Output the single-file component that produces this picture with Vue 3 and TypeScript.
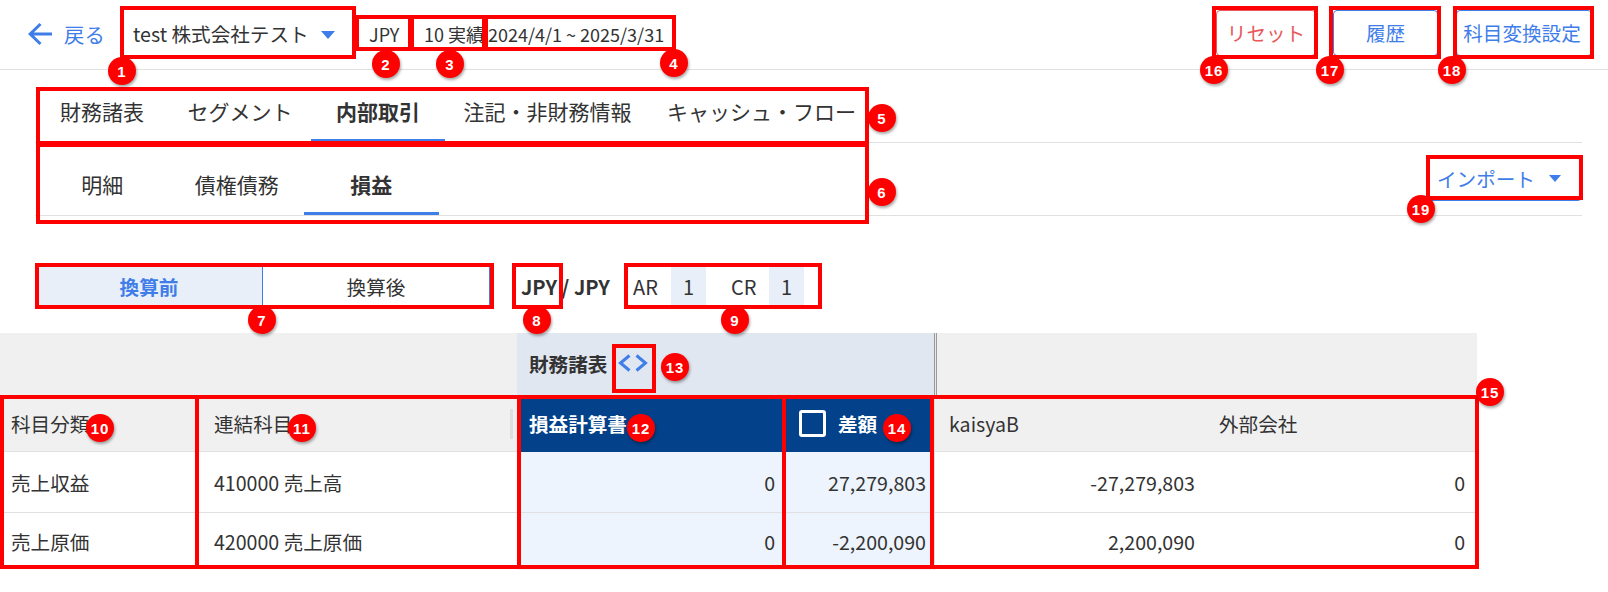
<script setup lang="ts">
interface Box { x: number; y: number; w: number; h: number }
interface Pin { n: number; x: number; y: number }

const mainTabs = ['財務諸表', 'セグメント', '内部取引', '注記・非財務情報', 'キャッシュ・フロー']
const subTabs = ['明細', '債権債務', '損益']

const rows = [
  { cat: '売上収益', acct: '410000 売上高', pl: '0', diff: '27,279,803', a: '-27,279,803', b: '0' },
  { cat: '売上原価', acct: '420000 売上原価', pl: '0', diff: '-2,200,090', a: '2,200,090', b: '0' },
]

const boxes: Box[] = [
  { x: 120, y: 6, w: 236, h: 53 },
  { x: 355, y: 15, w: 57, h: 36 },
  { x: 410, y: 15, w: 76, h: 36 },
  { x: 484, y: 15, w: 192, h: 36 },
  { x: 36, y: 87, w: 833, h: 58 },
  { x: 36, y: 143, w: 833, h: 81 },
  { x: 35, y: 263, w: 459, h: 46 },
  { x: 512, y: 263, w: 51, h: 46 },
  { x: 624, y: 263, w: 198, h: 46 },
  { x: 0, y: 395, w: 199, h: 174 },
  { x: 195, y: 395, w: 326, h: 174 },
  { x: 517, y: 395, w: 269, h: 174 },
  { x: 612, y: 344, w: 44, h: 49 },
  { x: 782, y: 395, w: 152, h: 174 },
  { x: 930, y: 395, w: 549, h: 174 },
  { x: 1212, y: 6, w: 106, h: 53 },
  { x: 1329, y: 6, w: 112, h: 53 },
  { x: 1453, y: 6, w: 141, h: 53 },
  { x: 1426, y: 155, w: 157, h: 45 },
]

const pins: Pin[] = [
  { n: 1, x: 122, y: 71 }, { n: 2, x: 386, y: 64 }, { n: 3, x: 450, y: 64 }, { n: 4, x: 674, y: 63 },
  { n: 5, x: 882, y: 118 }, { n: 6, x: 882, y: 192 }, { n: 7, x: 262, y: 320 }, { n: 8, x: 537, y: 320 },
  { n: 9, x: 735, y: 320 }, { n: 10, x: 100, y: 428 }, { n: 11, x: 302, y: 428 }, { n: 12, x: 641, y: 428 },
  { n: 13, x: 675, y: 367 }, { n: 14, x: 897, y: 428 }, { n: 15, x: 1490, y: 392 }, { n: 16, x: 1214, y: 70 },
  { n: 17, x: 1330, y: 70 }, { n: 18, x: 1452, y: 70 }, { n: 19, x: 1421, y: 209 },
]

const boxStyle = (b: Box) => ({ left: `${b.x}px`, top: `${b.y}px`, width: `${b.w}px`, height: `${b.h}px` })
const pinStyle = (p: Pin) => ({ left: `${p.x - 14}px`, top: `${p.y - 14}px` })
</script>

<template>
  <div class="page">
    <header class="topbar">
      <div class="back">
        <svg class="arrow" width="24" height="24" viewBox="0 0 24 24" fill="none" stroke="#3f7de8" stroke-width="3">
          <path d="M24 12H2M12.5 2 2.2 12l10.3 10" />
        </svg>
        <span>戻る</span>
      </div>
      <div class="company">
        <span>test 株式会社テスト</span>
        <i class="tri"></i>
      </div>
      <span class="meta jpy">JPY</span>
      <span class="meta actual">10 実績</span>
      <span class="meta date">2024/4/1 ~ 2025/3/31</span>
      <div class="spacer"></div>
      <button class="btn reset">リセット</button>
      <button class="btn hist">履歴</button>
      <button class="btn conv">科目変換設定</button>
    </header>

    <nav class="tabs main">
      <span v-for="t in mainTabs" :key="t" class="tab" :class="{ on: t === '内部取引' }">{{ t }}</span>
    </nav>

    <nav class="tabs sub">
      <span v-for="t in subTabs" :key="t" class="tab" :class="{ on: t === '損益' }">{{ t }}</span>
      <div class="spacer"></div>
      <button class="import"><span>インポート</span><i class="tri"></i></button>
    </nav>

    <section class="controls">
      <div class="toggle">
        <span class="seg active">換算前</span>
        <span class="seg">換算後</span>
      </div>
      <strong class="pair">JPY / JPY</strong>
      <div class="rates">
        <span class="rl">AR</span><span class="rv">1</span>
        <span class="rl cr">CR</span><span class="rv">1</span>
      </div>
    </section>

    <section class="table">
      <div class="cell top span2"></div>
      <div class="cell top group span2b">
        <strong>財務諸表</strong>
        <svg class="chev" width="32" height="18" viewBox="0 0 32 18" fill="none" stroke="#3f7de8" stroke-width="3">
          <path d="M12.5 1.5 3.5 9l9 7.5M19.5 1.5l9 7.5-9 7.5" />
        </svg>
      </div>
      <div class="cell top rule"></div>
      <div class="cell top span2c"></div>

      <div class="cell head pad">科目分類</div>
      <div class="cell head pad grip">連結科目</div>
      <div class="cell head dark pad"><strong>損益計算書</strong></div>
      <div class="cell head dark diffhead"><i class="check"></i><strong>差額</strong></div>
      <div class="cell head line"></div>
      <div class="cell head kaisya">kaisyaB</div>
      <div class="cell head gaibu">外部会社</div>

      <template v-for="(r, i) in rows" :key="r.cat">
        <div class="cell body pad" :class="{ last: i === 1 }">{{ r.cat }}</div>
        <div class="cell body pad" :class="{ last: i === 1 }">{{ r.acct }}</div>
        <div class="cell body num tint pl" :class="{ last: i === 1 }">{{ r.pl }}</div>
        <div class="cell body num tint df" :class="{ last: i === 1 }">{{ r.diff }}</div>
        <div class="cell body line" :class="{ last: i === 1 }"></div>
        <div class="cell body num ka" :class="{ last: i === 1 }">{{ r.a }}</div>
        <div class="cell body num ga" :class="{ last: i === 1 }">{{ r.b }}</div>
      </template>
    </section>

    <div v-for="(b, i) in boxes" :key="i" class="mark" :style="boxStyle(b)"></div>
    <div v-for="p in pins" :key="p.n" class="pin" :style="pinStyle(p)">{{ p.n }}</div>
  </div>
</template>

<style>
html, body { margin: 0; background: #fff; }
</style>

<style scoped>
.page {
  position: relative;
  width: 1608px;
  height: 592px;
  overflow: hidden;
  background: #fff;
  color: #333;
  font-family: "Noto Sans CJK JP", "Noto Sans", sans-serif;
  font-size: 18px;
}
.spacer { flex: 1; }
.tri {
  display: inline-block;
  width: 0;
  height: 0;
  border-left: 7.5px solid transparent;
  border-right: 7.5px solid transparent;
  border-top: 8px solid #3f7de8;
}
.topbar {
  display: flex;
  align-items: center;
  height: 69px;
  border-bottom: 1px solid #e0e0e0;
  box-sizing: content-box;
  padding: 0 16px 0 28px;
}
.back { display: flex; align-items: center; gap: 12px; width: 96px; color: #3f7de8; font-size: 20.4px; margin-top: -2px; }
.arrow { flex: none; }
.company { display: flex; align-items: center; width: 235px; padding-left: 9px; box-sizing: border-box; font-size: 19.6px; margin-top: -2px; }
.company .tri { margin-left: 12px; margin-top: 2px; }
.meta { font-size: 18px; margin-top: -2px; }
.jpy { margin-left: 10px; width: 55px; }
.actual { width: 64px; }
.btn {
  font-family: inherit;
  font-size: 19.6px;
  background: #fff;
  border: 1px solid #3f7de8;
  border-radius: 4px;
  color: #3f7de8;
  height: 46px;
  padding: 0;
  margin-top: -4px;
  line-height: 1;
}
.reset { width: 100px; color: #e8585a; border-color: #e8585a; margin-right: 17px; }
.hist { width: 105px; margin-right: 18px; }
.conv { width: 136px; padding-right: 4px; box-sizing: border-box; }
.tabs {
  display: flex;
  margin: 0 26px 0 35px;
  border-bottom: 1px solid #e0e0e0;
  height: 72px;
}
.tab { position: relative; display: flex; align-items: center; justify-content: center; font-size: 21px; }
.tab.on { font-weight: 700; }
.tab.on::after {
  content: "";
  position: absolute;
  left: 0;
  right: 0;
  bottom: 0;
  height: 3px;
  background: #3f7de8;
}
.main .tab { min-width: 134px; padding: 10px 18.5px 0; box-sizing: border-box; }
.main .tab:nth-child(5) { margin-left: -1.5px; }
.sub .tab { width: 134.5px; padding-top: 10px; box-sizing: border-box; }
.import {
  font-family: inherit;
  align-self: flex-start;
  margin-top: 12px;
  display: flex;
  align-items: center;
  justify-content: space-between;
  width: 156px;
  height: 46px;
  padding: 0 20px 0 10px;
  box-sizing: border-box;
  background: #fff;
  color: #3f7de8;
  border: 1px solid #3f7de8;
  border-radius: 4px;
  font-size: 19.6px;
}
.import .tri { border-left-width: 6.5px; border-right-width: 6.5px; border-top-width: 7.5px; }
.controls { display: flex; align-items: center; height: 46px; margin-top: 47px; padding-left: 35px; }
.toggle {
  display: flex;
  width: 455px;
  height: 44px;
  border: 1px solid #3f7de8;
  border-radius: 4px;
  box-sizing: border-box;
  font-size: 19.6px;
}
.seg { flex: 1; display: flex; align-items: center; justify-content: center; }
.seg.active { background: #e8eff9; color: #3f7de8; font-weight: 700; border-right: 1px solid #3f7de8; }
.pair { margin-left: 31px; width: 102px; font-size: 20px; }
.rates { display: flex; align-items: center; height: 38px; font-size: 20px; margin-left: 0; padding-left: 10px; }
.rl { width: 38px; }
.rv { width: 35px; height: 38px; display: flex; align-items: center; justify-content: center; background: #e8eff9; }
.rl.cr { width: 38px; margin-left: 25px; }
.table {
  display: grid;
  grid-template-columns: 203px 314px 267px 150px 3px 269px 271px;
  grid-template-rows: 62px 57px 61px 57px;
  margin-top: 24px;
  width: 1477px;
  font-size: 19.6px;
}
.cell { display: flex; align-items: center; box-sizing: border-box; }
.top { background: #f0f0f0; }
.span2 { grid-column: 1 / 3; }
.span2b { grid-column: 3 / 5; }
.span2c { grid-column: 6 / 8; }
.group { background: #e1e7f1; padding-left: 12px; gap: 10px; padding-bottom: 2px; }
.rule { border-left: 1px solid #9a9a9a; border-right: 1px solid #9a9a9a; background: #e8e8e8; }
.head { background: #f0f0f0; border-bottom: 1px solid #e0e0e0; }
.pad { padding-left: 11px; }
.grip { position: relative; }
.grip::after {
  content: "";
  position: absolute;
  right: 4px;
  top: 14px;
  width: 3px;
  height: 30px;
  background: #dedede;
}
.dark { background: #03428a; color: #fff; border-bottom: 0; padding-left: 12px; }
.diffhead { padding-left: 15px; gap: 12px; }
.check {
  width: 27px;
  height: 27px;
  border: 3px solid #fff;
  border-radius: 3px;
  box-sizing: border-box;
  display: block;
}
.kaisya { padding-left: 12px; }
.gaibu { padding-left: 13px; }
.body { border-bottom: 1px solid #e0e0e0; }
.body.last { border-bottom: 0; }
.num { justify-content: flex-end; }
.tint { background: #eef4fd; }
.pl { padding-right: 9px; }
.df { padding-right: 8px; }
.ka { padding-right: 11px; }
.ga { padding-right: 12px; }
.line { border-left: 1px solid #e0e0e0; }
.mark {
  position: absolute;
  border: 4px solid #f00;
  box-sizing: border-box;
  pointer-events: none;
}
.pin {
  position: absolute;
  width: 28px;
  height: 28px;
  border-radius: 50%;
  background: #f00;
  color: #fff;
  font-family: "Liberation Sans", sans-serif;
  font-weight: 700;
  font-size: 15px;
  letter-spacing: 1px;
  display: flex;
  align-items: center;
  justify-content: center;
  box-shadow: 1px 2px 3px rgba(0, 0, 0, 0.35);
}
</style>
